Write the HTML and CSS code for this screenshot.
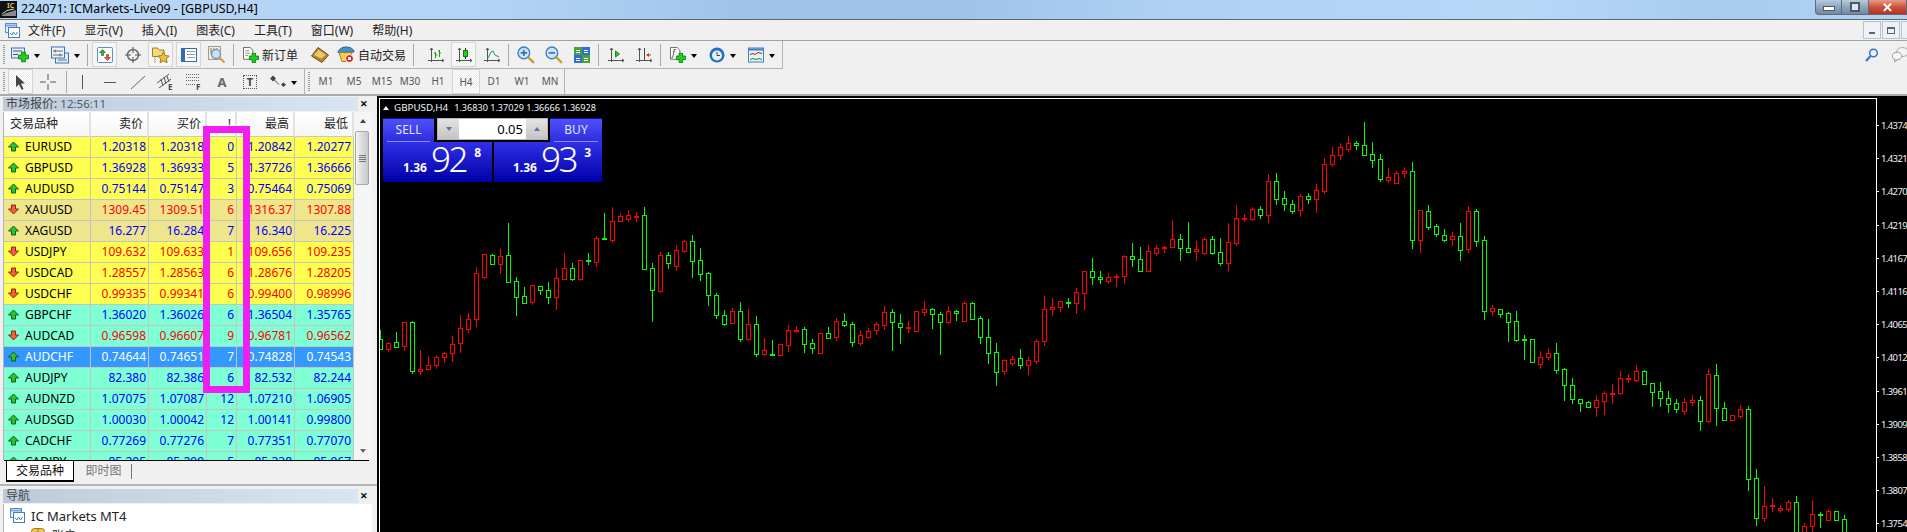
FILE: index.html
```html
<!DOCTYPE html>
<html lang="en">
<head>
    <meta charset="UTF-8">
    <meta name="viewport" content="width=device-width, initial-scale=1.0">
    <title>224071: ICMarkets-Live09 - [GBPUSD,H4]</title>
    <link rel="stylesheet" href="styles.css">
</head>
<body>
    <svg class="defs" aria-hidden="true">
        <symbol id="plus" viewBox="0 0 12 12"><path d="M4 .5h4V4h3.5v4H8v3.5H4V8H.5V4H4z" fill="#1fd01f" stroke="#0b7d0b"/></symbol>
        <symbol id="up" viewBox="0 0 11 11"><path d="M5.5 1 10.5 6H7.5V10H3.5V6H.5z" fill="#2fc02f" stroke="#0f5f1a"/></symbol>
        <symbol id="dn" viewBox="0 0 11 11"><path d="M5.5 10 10.5 5H7.5V1H3.5V5H.5z" fill="#f0603a" stroke="#8a2a10"/></symbol>
        <symbol id="mt4" viewBox="0 0 15 15"><rect x=".5" y=".5" width="11" height="9" fill="#e6f0fb" stroke="#5a8fc8"/><rect x="3.5" y="4.5" width="11" height="10" fill="#fff" stroke="#3f7fc0"/><path d="M5 10l2 2 1.5-3 2 3 2-3" fill="none" stroke="#4a7fb5"/><path d="M1 2.500h10" stroke="#7aa8dc" stroke-width="2"/></symbol>
        <symbol id="axes" viewBox="0 0 16 16"><path d="M3.500 1v14M0 13.500h16M2 3l1.500-2L5 3M14 12l2 1.500-2 1.500" fill="none" stroke="#555"/></symbol>
    </svg>

    <header class="titlebar">
        <svg class="app-icon" viewBox="0 0 17 17"><rect width="17" height="17" fill="#111"/><path d="M1 15 6 12l4-1 6-2v6z" fill="#8a8a8a"/><path d="M2 13 7 9.500l7-1.500" fill="none" stroke="#cfe8c0"/><text x="7" y="7" class="app-ic">IC</text></svg>
        <span class="title-text">224071: ICMarkets-Live09 - [GBPUSD,H4]</span>
        <div class="win-btns">
            <div class="win-btn win-min"><i></i></div>
            <div class="win-btn win-max"><i></i></div>
            <div class="win-btn win-close">✕</div>
        </div>
    </header>

    <nav class="menubar">
        <svg class="menu-icon"><use href="#mt4"/></svg>
        <span>文件(F)</span>
        <span>显示(V)</span>
        <span>插入(I)</span>
        <span>图表(C)</span>
        <span>工具(T)</span>
        <span>窗口(W)</span>
        <span>帮助(H)</span>
        <div class="mdi-btns">
            <div class="mdi-btn"><i class="mdi-min"></i></div>
            <div class="mdi-btn"><i class="mdi-max"></i></div>
            <div class="mdi-btn mdi-cut"></div>
        </div>
    </nav>

    <div class="band band-one">
        <div class="tools tools-one">
            <div class="grip"></div>
            <div class="dd">
                <svg class="ic18" viewBox="0 0 18 17"><rect x=".5" y="1.500" width="13" height="10" fill="#e2edf9" stroke="#3b74b0"/><path d="M2 4.500h9M2 8h5" stroke="#555"/><use href="#plus" x="7" y="5" width="11" height="11"/></svg>
                <i class="caret"></i>
            </div>
            <div class="dd">
                <svg class="ic18" viewBox="0 0 18 17"><rect x="4.500" y="6.500" width="13" height="10" fill="#e2edf9" stroke="#3b74b0"/><rect x=".5" y=".5" width="13" height="11" fill="#eef4fb" stroke="#3b74b0"/><path d="M2 4.500h10M2 8.500h10M4 3v3M9 7v3M7 13.500h9" stroke="#666"/></svg>
                <i class="caret"></i>
            </div>
            <div class="sep"></div>
            <div class="btn on">
                <svg class="ic16" viewBox="0 0 16 16"><rect x=".5" y=".5" width="15" height="15" rx="1" fill="#fff" stroke="#5a8fc8"/><path d="M5.500 2.500 8.500 5.500H6.500V8.500H4.500V5.500H2.500z" fill="#22b822" stroke="#0b6d0b" stroke-width=".6"/><path d="M10.500 13.500 13.500 10.500H11.500V7.500H9.500V10.500H7.500z" fill="#ef5a36" stroke="#8a2a10" stroke-width=".6"/></svg>
            </div>
            <div class="btn">
                <svg class="ic16" viewBox="0 0 16 16"><circle cx="8" cy="8" r="5.500" fill="none" stroke="#6a6a6a" stroke-width="1.500"/><path d="M8 0v6M8 10v6M0 8h6M10 8h6" stroke="#555"/></svg>
            </div>
            <div class="btn on">
                <svg class="ic18" viewBox="0 0 18 17"><path d="M.5 1.500h5l2 2H12V10H.5z" fill="#f3d878" stroke="#a08020"/><path d="M11.500 5.500l1.800 3.600 3.900.5-2.800 2.800.7 3.900-3.600-1.900-3.500 1.900.7-3.900-2.800-2.800 3.900-.5z" fill="#f0c040" stroke="#9a7a20"/><path d="M3 11v1M3 13v1M3 15v1" stroke="#555"/></svg>
            </div>
            <div class="btn on">
                <svg class="ic16" viewBox="0 0 16 16"><rect x=".5" y="1.500" width="15" height="13" fill="#fff" stroke="#2f6db0"/><rect x="1" y="2" width="3" height="12" fill="#2f6db0"/><path d="M6 4.500h8M6 7.500h8M6 10.500h8" stroke="#8da0c0"/><path d="M6 4.500h1M6 7.500h1" stroke="#d03030"/></svg>
            </div>
            <div class="btn">
                <svg class="ic18" viewBox="0 0 18 18"><rect x=".5" y=".5" width="12" height="13" fill="#f3ece0" stroke="#a59a8a"/><path d="M3 2v6M6 2v4M9 2v6" stroke="#777"/><circle cx="8" cy="8" r="4.500" fill="#cfe0f2" stroke="#7a9cc0" stroke-width="1.500"/><path d="M11.500 11.500 16.500 16.500" stroke="#d0a030" stroke-width="2"/></svg>
            </div>
            <div class="sep"></div>
            <div class="txt-btn">
                <svg class="ic16" viewBox="0 0 17 17"><path d="M.5.5h7l3 3V13H.5z" fill="#fff" stroke="#666"/><path d="M2.500 4h4M2.500 6.500h5M2.500 9h3" stroke="#888"/><use href="#plus" x="6" y="6" width="11" height="11"/></svg>
                <span>新订单</span>
            </div>
            <div class="book-btn">
                <svg class="ic18" viewBox="0 0 18 16"><path d="M.5 9 7 .5 17.500 8 11 15.500z" fill="#b8862a" stroke="#6a4a12"/><path d="M2.500 8 7.500 2.500 15 7.500 10.500 12z" fill="#ecc868" stroke="#a08030" stroke-width=".6"/></svg>
            </div>
            <div class="txt-btn txt-robot">
                <svg class="ic18" viewBox="0 0 18 17"><path d="M1 6c0-3 4-5.500 8-5.500s8 2 8 5z" fill="#4a90d0" stroke="#2a6090"/><path d="M2 6h13l-2 9H5z" fill="#f3d050" stroke="#a08020"/><circle cx="12.500" cy="12" r="4" fill="#e02020" stroke="#fff"/><rect x="11" y="10.500" width="3" height="3" fill="#fff"/></svg>
                <span>自动交易</span>
            </div>
            <div class="sep sep-wide"></div>
            <div class="btn">
                <svg class="ic16"><use href="#axes"/><path d="M7.500 5v6M7.500 8h2M6 6h1.500M11.500 3v7M11.500 6h1.500M10 4h1.500" stroke="#1c9a1c"/></svg>
            </div>
            <div class="btn on">
                <svg class="ic16"><use href="#axes"/><path d="M9.500 1v11" stroke="#222"/><rect x="7.500" y="3.500" width="4" height="6" fill="#1fd01f" stroke="#0b7d0b"/></svg>
            </div>
            <div class="btn">
                <svg class="ic16"><use href="#axes"/><path d="M4 11 7 5l2-1 2 4 4 2" fill="none" stroke="#1c9a6a"/></svg>
            </div>
            <div class="sep"></div>
            <div class="btn">
                <svg class="ic18" viewBox="0 0 17 17"><circle cx="6.500" cy="6.500" r="5.500" fill="#cfe4f8" stroke="#3f80c0" stroke-width="1.300"/><path d="M6.500 3.500v6M3.500 6.500h6" stroke="#2f70b0" stroke-width="1.500"/><path d="M10.500 10.500 16 16" stroke="#c8a030" stroke-width="2.200"/></svg>
            </div>
            <div class="btn">
                <svg class="ic18" viewBox="0 0 17 17"><circle cx="6.500" cy="6.500" r="5.500" fill="#cfe4f8" stroke="#3f80c0" stroke-width="1.300"/><path d="M3.500 6.500h6" stroke="#2f70b0" stroke-width="1.500"/><path d="M10.500 10.500 16 16" stroke="#c8a030" stroke-width="2.200"/></svg>
            </div>
            <div class="btn">
                <svg class="ic16" viewBox="0 0 16 16"><rect width="8" height="8" fill="#4aa03a"/><rect x="8" width="8" height="8" fill="#2f6fd0"/><rect y="8" width="8" height="8" fill="#2f6fd0"/><rect x="8" y="8" width="8" height="8" fill="#4aa03a"/><path d="M2 3.500h4M2 5.500h4M10 3.500h4M10 5.500h4M2 11.500h4M2 13.500h4M10 11.500h4M10 13.500h4" stroke="#fff"/></svg>
            </div>
            <div class="sep"></div>
            <div class="btn">
                <svg class="ic16"><use href="#axes"/><path d="M7.500 4v6l4-3z" fill="#2ac82a" stroke="#1c8a1c"/></svg>
            </div>
            <div class="btn">
                <svg class="ic16"><use href="#axes"/><path d="M8.500 1v12" stroke="#444"/><path d="M10 8l3-2v1.500h2v1h-2V10z" fill="#d03020"/></svg>
            </div>
            <div class="sep"></div>
            <div class="dd dd-end">
                <svg class="ic16" viewBox="0 0 17 17"><path d="M.5.5h7l3 3V13H.5z" fill="#fff" stroke="#666"/><text x="2.500" y="10" class="ic-f">f</text><use href="#plus" x="6" y="6" width="11" height="11"/></svg>
                <i class="caret"></i>
            </div>
            <div class="dd dd-end">
                <svg class="ic16" viewBox="0 0 16 16"><circle cx="8" cy="8" r="7.500" fill="#1f6fc8"/><circle cx="8" cy="8.500" r="5" fill="#e8eef4"/><path d="M8 5v3.500h3" fill="none" stroke="#444"/></svg>
                <i class="caret"></i>
            </div>
            <div class="dd dd-end">
                <svg class="ic16" viewBox="0 0 16 15"><rect x=".5" y=".5" width="15" height="14" fill="#e6eef6" stroke="#3f80c0"/><rect x="1" y="1" width="14" height="2" fill="#3f80c0"/><path d="M2 7l3-1 2 1 3-2 4 1" fill="none" stroke="#a03020"/><path d="M2 12l3-1 3 1 3-1 3 1" fill="none" stroke="#2a8a2a"/></svg>
                <i class="caret"></i>
            </div>
        </div>
        <div class="band-right">
            <svg class="ic-search" viewBox="0 0 14 14"><circle cx="8.500" cy="5" r="3.800" fill="none" stroke="#3a6fd0" stroke-width="1.500"/><path d="M5.500 8 1 13" stroke="#3a6fd0" stroke-width="2"/></svg>
            <svg class="ic-chat" viewBox="0 0 15 16"><ellipse cx="10.500" cy="5" rx="6" ry="4.500" fill="#f4f4f4" stroke="#aaa"/><ellipse cx="5" cy="9" rx="4.800" ry="3.800" fill="#f8f8f8" stroke="#999"/><path d="M3 12l-.5 3 3-2.500" fill="#f8f8f8" stroke="#999"/></svg>
        </div>
    </div>

    <div class="band band-two">
        <div class="tools tools-draw">
            <div class="grip"></div>
            <div class="btn btn-cursor on">
                <svg class="ic16" viewBox="0 0 16 16"><path d="M3 1l9 8.500H8l2.500 5.500-2 .8L6 10.300 3 13z" fill="#444"/></svg>
            </div>
            <div class="draw-btn">
                <svg class="ic16" viewBox="0 0 16 16"><path d="M8 0v6M8 10v6M0 8h6M10 8h6" stroke="#555"/></svg>
            </div>
            <div class="sep"></div>
            <div class="draw-btn"><svg class="ic16" viewBox="0 0 16 16"><path d="M8.500 1v14" stroke="#555"/></svg></div>
            <div class="draw-btn"><svg class="ic16" viewBox="0 0 16 16"><path d="M2 8.500h12" stroke="#555"/></svg></div>
            <div class="draw-btn"><svg class="ic16" viewBox="0 0 16 16"><path d="M1 15 15 2" stroke="#666"/></svg></div>
            <div class="draw-btn"><svg class="ic18" viewBox="0 0 18 18"><path d="M0 10 12 1M2 15 14 6M4 6l2 7M7 4l2 7M10 3l2 6" stroke="#555"/><text x="11" y="17" class="ic-letter">E</text></svg></div>
            <div class="draw-btn"><svg class="ic18" viewBox="0 0 18 18"><path d="M1 1.500h14M1 4.500h14M1 7.500h14M1 11.500h10" stroke="#666" stroke-dasharray="1 1"/><text x="11" y="17" class="ic-letter">F</text></svg></div>
            <div class="draw-btn draw-a">A</div>
            <div class="draw-btn">
                <div class="t-box">T</div>
            </div>
            <div class="draw-btn draw-shapes">
                <svg class="ic16" viewBox="0 0 16 13"><path d="M0 3l3-3 3 3-3 3zM4 6.500l5 3M11 9l2.500-2L16 9l-2.500 2.500z" fill="#444"/><path d="M4 4l5 5" stroke="#444"/></svg>
                <i class="caret"></i>
            </div>
            <div class="sep sep-end"></div>
        </div>
        <div class="tools tools-period">
            <div class="grip"></div>
            <div class="periods">
                <span>M1</span><span>M5</span><span>M15</span><span>M30</span><span>H1</span><span class="on">H4</span><span>D1</span><span>W1</span><span>MN</span>
            </div>
        </div>
    </div>

    <main class="main">
        <aside class="side">
            <div class="pane-head"><span class="pane-title">市场报价: <em>12:56:11</em></span><span class="pane-x">✕</span></div>
            <div class="watch">
                <div class="watch-list">
                    <table class="quotes">
                        <colgroup><col class="c-sym"><col class="c-px"><col class="c-px"><col class="c-sp"><col class="c-px"><col class="c-last"></colgroup>
                        <thead>
                            <tr><th class="sym-head">交易品种</th><th>卖价</th><th>买价</th><th>!</th><th>最高</th><th>最低</th></tr>
                        </thead>
                        <tbody>
                            <tr class="yellow up"><td class="sym"><svg><use href="#up"/></svg>EURUSD</td><td>1.20318</td><td>1.20318</td><td>0</td><td>1.20842</td><td>1.20277</td></tr>
                            <tr class="yellow up"><td class="sym"><svg><use href="#up"/></svg>GBPUSD</td><td>1.36928</td><td>1.36933</td><td>5</td><td>1.37726</td><td>1.36666</td></tr>
                            <tr class="yellow up"><td class="sym"><svg><use href="#up"/></svg>AUDUSD</td><td>0.75144</td><td>0.75147</td><td>3</td><td>0.75464</td><td>0.75069</td></tr>
                            <tr class="khaki dn"><td class="sym"><svg><use href="#dn"/></svg>XAUUSD</td><td>1309.45</td><td>1309.51</td><td>6</td><td>1316.37</td><td>1307.88</td></tr>
                            <tr class="khaki up"><td class="sym"><svg><use href="#up"/></svg>XAGUSD</td><td>16.277</td><td>16.284</td><td>7</td><td>16.340</td><td>16.225</td></tr>
                            <tr class="yellow dn"><td class="sym"><svg><use href="#dn"/></svg>USDJPY</td><td>109.632</td><td>109.633</td><td>1</td><td>109.656</td><td>109.235</td></tr>
                            <tr class="yellow dn"><td class="sym"><svg><use href="#dn"/></svg>USDCAD</td><td>1.28557</td><td>1.28563</td><td>6</td><td>1.28676</td><td>1.28205</td></tr>
                            <tr class="yellow dn"><td class="sym"><svg><use href="#dn"/></svg>USDCHF</td><td>0.99335</td><td>0.99341</td><td>6</td><td>0.99400</td><td>0.98996</td></tr>
                            <tr class="aqua up"><td class="sym"><svg><use href="#up"/></svg>GBPCHF</td><td>1.36020</td><td>1.36026</td><td>6</td><td>1.36504</td><td>1.35765</td></tr>
                            <tr class="aqua dn"><td class="sym"><svg><use href="#dn"/></svg>AUDCAD</td><td>0.96598</td><td>0.96607</td><td>9</td><td>0.96781</td><td>0.96562</td></tr>
                            <tr class="selected"><td class="sym"><svg><use href="#up"/></svg>AUDCHF</td><td>0.74644</td><td>0.74651</td><td>7</td><td>0.74828</td><td>0.74543</td></tr>
                            <tr class="aqua up"><td class="sym"><svg><use href="#up"/></svg>AUDJPY</td><td>82.380</td><td>82.386</td><td>6</td><td>82.532</td><td>82.244</td></tr>
                            <tr class="aqua up"><td class="sym"><svg><use href="#up"/></svg>AUDNZD</td><td>1.07075</td><td>1.07087</td><td>12</td><td>1.07210</td><td>1.06905</td></tr>
                            <tr class="aqua up"><td class="sym"><svg><use href="#up"/></svg>AUDSGD</td><td>1.00030</td><td>1.00042</td><td>12</td><td>1.00141</td><td>0.99800</td></tr>
                            <tr class="aqua up"><td class="sym"><svg><use href="#up"/></svg>CADCHF</td><td>0.77269</td><td>0.77276</td><td>7</td><td>0.77351</td><td>0.77070</td></tr>
                            <tr class="aqua up"><td class="sym"><svg><use href="#up"/></svg>CADJPY</td><td>85.295</td><td>85.299</td><td>5</td><td>85.338</td><td>85.067</td></tr>
                        </tbody>
                    </table>
                </div>
                <div class="scroll">
                    <i class="scroll-up"></i>
                    <div class="scroll-thumb"><b></b></div>
                    <i class="scroll-down"></i>
                </div>
            </div>
            <div class="tabs">
                <div class="tab-active">交易品种</div>
                <div class="tab">即时图</div>
                <div class="tab-sep"></div>
            </div>
            <div class="pane-rule"></div>
            <div class="pane-head"><span class="pane-title">导航</span><span class="pane-x">✕</span></div>
            <div class="tree">
                <div class="tree-row"><svg class="tree-root"><use href="#mt4"/></svg>IC Markets MT4</div>
                <div class="tree-row tree-child">
                    <svg class="tree-acct" viewBox="0 0 14 14"><rect x=".5" y=".5" width="13" height="13" rx="3" fill="#f0c850" stroke="#9a7a20"/><path d="M7 1v12" stroke="#9a7a20"/></svg>账户
                </div>
            </div>
            <div class="highlight"></div>
        </aside>

        <section class="chart">
            <div class="plot">
                <svg id="candles" class="candles" viewBox="380 99 1496 433"></svg>
                <div class="chart-label">
                    <i class="tri"></i><span>GBPUSD,H4</span><span class="ohlc">1.36830 1.37029 1.36666 1.36928</span>
                </div>
                <div class="trade">
                    <div class="trade-top">
                        <div class="side-btn side-sell"><span>SELL</span></div>
                        <div class="lot">
                            <i class="spin"><b class="spin-dn"></b></i>
                            <span class="lot-val">0.05</span>
                            <i class="spin"><b class="spin-up"></b></i>
                        </div>
                        <div class="side-btn side-buy"><span>BUY</span></div>
                    </div>
                    <div class="trade-prices">
                        <div class="price price-sell"><span class="p-pre">1.36</span><span class="p-big">92</span><span class="p-tiny">8</span></div>
                        <div class="price price-buy"><span class="p-pre">1.36</span><span class="p-big">93</span><span class="p-tiny">3</span></div>
                    </div>
                </div>
            </div>
            <div class="axis">
                <div>1.4374</div><div>1.4321</div><div>1.4270</div><div>1.4219</div><div>1.4167</div><div>1.4116</div><div>1.4065</div><div>1.4012</div><div>1.3961</div><div>1.3909</div><div>1.3858</div><div>1.3807</div><div>1.3754</div>
            </div>
        </section>
    </main>

    <script src="chart.js"></script>
</body>
</html>
```

FILE: styles.css
```css
* {
    box-sizing: border-box;
}
html, body {
    margin: 0;
    height: 532px;
    overflow: hidden;
}
body {
    width: 1907px;
    font-family: "Noto Sans", "Noto Sans CJK SC", sans-serif;
    font-size: 12px;
    color: #111;
    background: #f0f0f0;
}
.defs {
    position: absolute;
    width: 0;
    height: 0;
}

/* title bar */
.titlebar {
    display: flex;
    align-items: flex-start;
    height: 20px;
    border-bottom: 1px solid #5d6877;
    background: linear-gradient(90deg, #b7d6f6 0, #b4d4f5 25%, #a1c5ea 38%, #9fc3e9 50%, #b0d1f3 62%, #b7d7f7 80%, #a8cbee 90%, #b3d3f4 100%);
}
.app-icon {
    width: 17px;
    height: 17px;
    margin: 1px 4px 0 0;
}
.app-ic {
    font-size: 7px;
    font-weight: 700;
    fill: #d8c070;
}
.title-text {
    font-size: 12.400px;
    line-height: 18px;
    color: #000;
}
.win-btns {
    display: flex;
    margin-left: auto;
    height: 15px;
}
.win-btn {
    display: flex;
    align-items: center;
    justify-content: center;
    width: 27px;
    border: 1px solid #5e6b7a;
    border-top: 0;
    border-left-width: 0;
    background: linear-gradient(#b9cbdd, #8fa5bc 50%, #71889f);
}
.win-min {
    border-left-width: 1px;
    border-radius: 0 0 0 4px;
}
.win-min i {
    width: 12px;
    height: 5px;
    margin-top: 3px;
    background: #fff;
    border: 1px solid #4b5a6b;
}
.win-max i {
    width: 10px;
    height: 10px;
    background: #dfe6ee;
    border: 2px solid #4b5a6b;
}
.win-close {
    width: 38px;
    font-size: 13px;
    font-weight: 700;
    line-height: 14px;
    color: #fff;
    background: linear-gradient(#e89a88, #c9543c 50%, #b8321c);
}

/* menu */
.menubar {
    display: flex;
    align-items: center;
    height: 21px;
    border-bottom: 1px solid #a3a3a3;
    background: #f0f0f0;
}
.menubar span {
    margin-right: 19px;
    color: #222;
}
.menu-icon {
    width: 15px;
    height: 15px;
    margin: 0 8px 0 5px;
}
.mdi-btns {
    display: flex;
    gap: 1px;
    margin-left: auto;
}
.mdi-btn {
    display: flex;
    align-items: center;
    justify-content: center;
    width: 18px;
    height: 18px;
    border: 1px solid #b3c4d6;
    background: #eef2f6;
}
.mdi-cut {
    width: 6px;
    border-right: 0;
}
.mdi-min {
    width: 6px;
    height: 2px;
    margin-top: 6px;
    background: #5a6676;
}
.mdi-max {
    width: 8px;
    height: 7px;
    border: 1px solid #5a6676;
    border-top-width: 2px;
}

/* toolbars */
.band {
    display: flex;
}
.band-one {
    height: 28px;
}
.band-two {
    height: 27px;
    border-bottom: 2px solid #ababab;
}
.tools {
    display: flex;
    align-items: center;
    padding-left: 3px;
}
.tools-one {
    width: 783px;
    border-right: 1px solid #b4b4b4;
    border-bottom: 1px solid #b4b4b4;
}
.tools-draw {
    width: 305px;
}
.tools-period {
    width: 260px;
    border-right: 1px solid #b4b4b4;
}
.grip {
    flex: none;
    width: 2px;
    height: 20px;
    margin-right: 2px;
    background: repeating-linear-gradient(#999 0 1px, transparent 1px 2px);
}
.sep {
    flex: none;
    width: 1px;
    height: 22px;
    margin: 0 4px 0 1px;
    background: #a8a8a8;
}
.sep-wide {
    margin-right: 9px;
}
.tools-draw .sep {
    margin: 0 1px 0 4px;
}
.tools-draw .sep-end {
    margin: 0 0 0 auto;
    height: 25px;
    background: #b4b4b4;
}
.btn {
    flex: none;
    display: flex;
    align-items: center;
    justify-content: center;
    width: 25px;
    height: 25px;
    margin-right: 3px;
}
.on {
    border: 1px solid #d4d4d4;
    background: repeating-conic-gradient(#fff 0 25%, #ececec 0 50%) 0 0 / 2px 2px;
}
.dd {
    flex: none;
    display: flex;
    align-items: center;
    width: 39.500px;
    padding-left: 4px;
}
.dd-end {
    width: 39px;
}
.sep + .dd-end {
    margin-left: 1px;
}
.ic16 {
    flex: none;
    width: 16px;
    height: 16px;
}
.ic18 {
    flex: none;
    width: 18px;
    height: 18px;
}
.ic-f {
    font-size: 9px;
    font-style: italic;
    fill: #333;
}
.ic-letter {
    font-size: 8px;
    font-weight: 700;
    fill: #444;
}
.caret {
    flex: none;
    width: 0;
    height: 0;
    margin: 2px 0 0 5px;
    border: 3.500px solid transparent;
    border-top: 4px solid #000;
    border-bottom: 0;
}
.txt-btn {
    flex: none;
    display: flex;
    align-items: center;
    gap: 3px;
    padding: 0 5px;
    color: #222;
}
.book-btn {
    flex: none;
    display: flex;
    justify-content: center;
    width: 34px;
}
.txt-robot {
    gap: 3px;
    padding: 0 6px 0 0;
}
.band-right {
    display: flex;
    align-items: center;
    gap: 13px;
    margin-left: auto;
}
.ic-search {
    width: 14px;
    height: 14px;
}
.ic-chat {
    width: 15px;
    height: 16px;
}

.btn-cursor {
    margin: 0 1px 0 1px;
}
.draw-btn {
    flex: none;
    display: flex;
    align-items: center;
    justify-content: center;
    width: 28px;
}
.draw-a {
    font-size: 13px;
    font-weight: 700;
    color: #666;
}
.t-box {
    width: 14px;
    height: 14px;
    font-size: 11px;
    font-weight: 700;
    line-height: 12px;
    text-align: center;
    color: #444;
    border: 1px dotted #555;
}
.draw-shapes {
    justify-content: flex-start;
    width: 36px;
    padding-left: 6px;
}
.periods {
    display: flex;
    align-items: center;
}
.periods span {
    width: 28px;
    height: 25px;
    font-size: 10px;
    line-height: 25px;
    text-align: center;
    color: #555;
}

/* main area */
.main {
    display: flex;
    height: 436px;
}
.side {
    position: relative;
    flex: none;
    width: 377px;
    padding: 1px 5px 0 3px;
}
.pane-head {
    display: flex;
    align-items: center;
    height: 14px;
}
.pane-title {
    width: 355px;
    height: 14px;
    padding-left: 3px;
    font-size: 12px;
    line-height: 14px;
    color: #444;
    background: linear-gradient(90deg, #bccadb, #d9e6f2);
}
.pane-title em {
    font-style: normal;
    font-size: 11.500px;
    color: #4a5a6a;
}
.pane-x {
    margin-left: 2px;
    font-size: 9px;
    font-weight: 700;
    line-height: 14px;
    color: #000;
}
.watch {
    display: flex;
    height: 348px;
    margin-top: 1px;
    background: #fff;
    border-left: 1px solid #b4b4b4;
}
.watch-list {
    width: 351px;
    height: 348px;
    overflow: hidden;
}
.quotes {
    width: 350px;
    table-layout: fixed;
    border-collapse: separate;
    border-spacing: 0;
}
.c-sym {
    width: 87px;
}
.c-px {
    width: 58px;
}
.c-sp {
    width: 30px;
}
.c-last {
    width: 59px;
}
.quotes th {
    height: 25px;
    padding: 0 4px 2px 0;
    font-weight: 400;
    text-align: right;
    color: #222;
    background: linear-gradient(#fff, #f6f6f6);
    border-right: 2px solid #e2e2e2;
    border-bottom: 1px solid #c8c8c8;
}
.quotes .sym-head {
    padding-left: 6px;
    text-align: left;
}
.quotes td {
    height: 21px;
    padding: 0 2px 0 0;
    line-height: 20px;
    text-align: right;
    white-space: nowrap;
    overflow: hidden;
    border-right: 1px solid #c4c4c4;
    border-bottom: 1px solid #c4c4c4;
}
.quotes .sym {
    padding-left: 4px;
    text-align: left;
    color: #000;
}
.sym svg {
    width: 11px;
    height: 11px;
    margin-right: 6px;
    vertical-align: -1px;
}
.yellow {
    background: #ffff50;
}
.khaki {
    background: #efe68c;
}
.aqua {
    background: #7fffd4;
}
.up {
    color: #0000ff;
}
.dn {
    color: #ff0000;
}
.selected {
    color: #fff;
    background: #3399ff;
}
.quotes .selected .sym {
    color: #fff;
}
.scroll {
    position: relative;
    flex: none;
    width: 18px;
    background: #f5f5f5;
}
.scroll-up, .scroll-down {
    position: absolute;
    left: 6px;
    border: 3.500px solid transparent;
}
.scroll-up {
    top: 7px;
    border-bottom: 4px solid #444;
    border-top: 0;
}
.scroll-down {
    bottom: 7px;
    border-top: 4px solid #666;
    border-bottom: 0;
}
.scroll-thumb {
    display: flex;
    align-items: center;
    justify-content: center;
    width: 14px;
    height: 54px;
    margin: 19px 0 0 1px;
    border: 1px solid #a8a8a8;
    border-radius: 2px;
    background: linear-gradient(90deg, #f4f4f4, #dcdcdc 50%, #c8c8c8);
}
.scroll-thumb b {
    width: 7px;
    height: 7px;
    background: repeating-linear-gradient(#777 0 1px, transparent 1px 2px);
}
.tabs {
    display: flex;
    align-items: flex-start;
    height: 24px;
    border-top: 1px solid #000;
    margin-left: 1px;
    width: 365px;
    background: #f0f0f0;
}
.tab-active {
    width: 68px;
    height: 21px;
    margin-left: 2px;
    line-height: 20px;
    text-align: center;
    background: #fff;
    border: 1px solid #000;
    border-top: 0;
    border-width: 0 1px 2px;
}
.tab {
    width: 57px;
    padding-left: 2px;
    line-height: 20px;
    text-align: center;
    color: #777;
}
.tab-sep {
    width: 1px;
    height: 15px;
    margin-top: 3px;
    background: #777;
}
.pane-rule {
    height: 5px;
    margin: 0 -5px 0 -3px;
    border-top: 2px solid #b4b4b4;
}
.tree {
    height: 30px;
    margin-top: 1px;
    padding-top: 2px;
    background: #fff;
    border-left: 1px solid #b4b4b4;
}
.tree-row {
    display: flex;
    align-items: center;
    height: 19px;
    font-size: 13px;
    color: #222;
}
.tree-root {
    width: 15px;
    height: 15px;
    margin: 0 6px 0 6px;
}
.tree-child {
    font-size: 12px;
    padding-left: 27px;
}
.tree-acct {
    width: 14px;
    height: 14px;
    margin-right: 7px;
}

/* frame somebody drew over the spread column */
.highlight {
    position: absolute;
    left: 203px;
    top: 30px;
    width: 47px;
    height: 267px;
    border: 7px solid #f01ef0;
}

/* chart */
.chart {
    display: flex;
    flex: 1;
    padding: 2px 0 0 2px;
    background: #000;
}
.plot {
    position: relative;
    flex: none;
    width: 1498px;
    overflow: hidden;
    border: 1px solid #fff;
    border-width: 1px 1px 0;
}
.candles {
    position: absolute;
    left: 0;
    top: 0;
    width: 1496px;
    height: 433px;
    shape-rendering: crispEdges;
}
.chart-label {
    position: absolute;
    left: 3px;
    top: 1px;
    display: flex;
    align-items: center;
    height: 15px;
    font-size: 9.800px;
    color: #f2f6fa;
}
.tri {
    width: 0;
    height: 0;
    margin: 0 5px 0 0;
    border: 3.500px solid transparent;
    border-bottom: 4px solid #fff;
    border-top: 0;
}
.ohlc {
    margin-left: 6px;
    font-size: 9.100px;
}
.trade {
    position: absolute;
    left: 3px;
    top: 19px;
    width: 219px;
}
.trade-top {
    display: flex;
    align-items: flex-start;
    height: 24px;
}
.side-btn {
    height: 24px;
    padding: 0 4px;
    text-align: center;
    font-size: 12px;
    line-height: 21px;
    color: #dfe4ff;
    background: linear-gradient(#5050fa, #2c2ce0);
    border-top: 1px solid #1010a0;
}
.side-btn span {
    display: block;
    height: 23px;
    border-bottom: 1px solid #8c8cf0;
}
.side-sell {
    width: 51px;
}
.side-buy {
    width: 52px;
}
.lot {
    display: flex;
    width: 111px;
    height: 22px;
    margin: 0 2px 0 3px;
    border: 1px solid #b8b8b8;
    background: #fff;
}
.spin {
    display: flex;
    align-items: center;
    justify-content: center;
    flex: none;
    width: 21px;
    background: linear-gradient(#e4e4e4, #c4c4c4);
}
.spin b {
    width: 0;
    height: 0;
    border: 3px solid transparent;
}
.spin .spin-dn {
    border-top: 4px solid #6070a8;
    border-bottom: 0;
}
.spin .spin-up {
    border-bottom: 4px solid #6070a8;
    border-top: 0;
}
.lot-val {
    flex: 1;
    padding-right: 3px;
    font-size: 13px;
    line-height: 20px;
    text-align: right;
    color: #000;
}
.trade-prices {
    display: flex;
    gap: 2px;
}
.price {
    display: flex;
    align-items: baseline;
    height: 40px;
    padding-top: 2px;
    color: #fff;
    background: linear-gradient(#3030e8, #0000a8);
}
.price-sell {
    width: 109px;
    padding-left: 20px;
}
.price-buy {
    width: 108px;
    padding-left: 19px;
}
.p-pre {
    font-weight: 700;
    margin-right: 4px;
}
.p-big {
    font-size: 35px;
    font-weight: 300;
    line-height: 30px;
    letter-spacing: -2.400px;
}
.p-tiny {
    align-self: flex-start;
    margin: 2px 0 0 8px;
    font-weight: 700;
    line-height: 14px;
}
.axis {
    flex: none;
    width: 30px;
    padding-top: 11px;
    overflow: hidden;
}
.axis div {
    position: relative;
    height: 33.200px;
    padding-left: 4px;
    font-size: 9.500px;
    letter-spacing: -.6px;
    line-height: 33px;
    color: #eef4fa;
    white-space: nowrap;
}
.axis div::before {
    content: "";
    position: absolute;
    left: 0;
    top: 16px;
    width: 2px;
    height: 1px;
    background: #fff;
}
```

FILE: chart.js
```js
// candles as [colour, high, bodyTop, bodyBottom, low], 3x offsets from y=100
const candles = [
    'g 690 718 748 748', 'r 725 728 746 755', 'g 697 727 740 743', 'r 667 667 738 752', 'g 663 667 812 821',
    'r 751 806 814 825', 'r 769 794 806 808', 'r 766 772 796 807', 'r 757 760 772 789', 'r 709 731 760 785',
    'r 646 685 730 758', 'r 640 658 686 699', 'r 502 520 658 681', 'r 463 463 530 537', 'g 462 466 492 495',
    'r 448 469 491 522', 'g 370 466 545 549', 'g 532 544 590 648', 'g 562 589 608 611', 'r 556 556 605 615',
    'g 557 557 569 585', 'g 547 569 590 612', 'r 504 535 590 630', 'r 460 505 536 537', 'g 490 505 538 543',
    'r 481 481 538 543', 'g 460 481 484 495', 'r 409 415 485 501', 'g 340 414 418 418', 'r 322 364 419 429',
    'r 340 349 364 364', 'r 331 346 357 366', 'r 335 347 347 366', 'g 322 346 507 510', 'g 490 505 569 666',
    'r 457 466 573 579', 'g 457 466 488 507', 'r 436 451 497 514', 'r 421 424 452 458', 'g 406 424 482 534',
    'g 445 481 521 543', 'g 517 520 586 618', 'g 580 586 644 657', 'g 631 646 671 678', 'r 625 634 670 671',
    'g 607 634 717 725', 'r 628 673 717 723', 'g 649 673 761 771', 'r 714 751 763 767', 'g 721 761 764 766',
    'r 732 733 764 765', 'r 676 691 734 755', 'r 678 689 690 700', 'g 682 688 731 759', 'g 718 730 743 762',
    'r 700 700 760 761', 'g 682 700 713 716', 'r 655 664 711 723', 'g 640 664 674 681', 'g 667 673 725 741',
    'r 691 706 728 737',
    'r 685 692 710 716', 'r 667 673 691 705', 'r 618 637 674 690', 'g 628 637 667 752', 'g 643 670 682 731',
    'r 664 680 681 698', 'r 633 634 692 692', 'r 603 628 635 647', 'g 625 628 643 687', 'g 637 643 665 765',
    'r 618 634 665 671', 'g 631 634 638 662', 'r 603 609 662 662', 'g 606 609 657 659', 'g 649 655 712 732',
    'g 657 712 760 792', 'g 730 757 815 858', 'r 778 781 814 824', 'r 769 776 788 797', 'g 748 775 796 806',
    'r 772 781 796 825', 'r 718 724 782 791', 'r 588 628 724 738', 'r 594 622 628 647', 'r 604 604 620 636',
    'g 594 607 608 624', 'r 565 577 608 642', 'r 512 514 578 629', 'g 475 514 532 555', 'g 514 532 538 552',
    'r 520 532 544 552', 'r 523 529 531 561', 'r 466 469 529 552', 'g 430 469 478 501', 'g 442 478 512 512',
    'r 436 454 512 512', 'r 436 445 460 468', 'r 439 442 444 459', 'r 361 418 442 442', 'g 403 418 445 483',
    'g 366 445 455 458', 'r 424 448 454 483', 'r 412 418 458 465', 'g 409 418 458 465', 'g 415 457 488 498',
    'r 370 427 488 513', 'r 316 355 428 438', 'r 342 355 356 366', 'r 322 328 358 363', 'g 319 328 344 357',
    'r 223 244 344 369', 'g 220 244 296 315', 'g 274 295 313 333', 'g 301 313 334 342', 'r 283 289 331 351',
    'g 280 289 298 312', 'r 253 271 298 339', 'r 175 193 272 282', 'r 142 166 193 201', 'r 130 142 166 180',
    'r 109 130 148 156', 'g 124 130 136 150',
    'g 66 136 164 164', 'g 126 163 179 204', 'g 163 178 238 246', 'r 205 232 239 249', 'r 214 220 248 248',
    'r 202 214 220 234', 'g 186 214 421 447', 'r 331 331 421 459', 'g 316 334 380 389', 'g 373 379 401 411',
    'g 388 406 419 426', 'r 397 409 418 438', 'g 370 409 449 483', 'r 319 334 448 459', 'g 328 334 422 441',
    'g 408 421 634 660', 'r 616 625 634 648', 'g 626 626 641 654', 'g 636 640 665 726', 'g 633 664 719 726',
    'g 706 718 719 780', 'g 718 718 785 789', 'r 754 772 791 807', 'r 745 760 770 780', 'g 730 760 809 822',
    'g 805 808 854 903', 'g 834 856 896 912', 'g 896 896 908 936', 'g 904 907 920 924', 'r 886 901 921 951',
    'r 874 879 902 945', 'r 853 878 879 912', 'r 814 835 878 885', 'r 823 833 834 849', 'r 796 814 839 846',
    'g 810 814 851 855', 'g 850 850 875 921', 'g 846 874 895 921', 'g 873 895 911 939', 'g 898 910 926 939',
    'r 895 907 932 945', 'r 886 901 907 918', 'g 888 901 962 993', 'r 808 823 963 969', 'g 793 826 925 978',
    'g 907 925 959 959', 'r 946 946 960 964', 'r 916 928 947 957', 'g 918 928 1136 1173', 'g 1108 1135 1253 1278',
    'r 1159 1219 1253 1266', 'r 1194 1216 1219 1236', 'r 1216 1225 1231 1240', 'r 1201 1207 1226 1236', 'g 1189 1207 1320 1320',
    'r 1270 1279 1320 1320', 'r 1200 1243 1279 1320', 'g 1236 1241 1242 1284', 'r 1228 1234 1261 1263', 'g 1234 1234 1260 1263',
    'g 1246 1258 1320 1320'
];

const colours = { g: '#00ff00', r: '#ff0000' };
const y3 = v => Math.round(100 + v / 3);

let svg = '';
candles.forEach((row, i) => {
    const [c, high, top, bottom, low] = row.split(' ');
    const x = 380 + i * 8;
    const t = y3(+top);
    const b = Math.max(y3(+bottom), t + 1);
    const col = colours[c];
    svg += `<path d="M${x + .5} ${y3(+high)}V${t}M${x + .5} ${b}V${y3(+low)}" stroke="${col}"/>`;
    svg += `<rect x="${x - 1.5}" y="${t + .5}" width="4" height="${b - t}" fill="#000" stroke="${col}"/>`;
});
document.getElementById('candles').innerHTML = svg;
```
